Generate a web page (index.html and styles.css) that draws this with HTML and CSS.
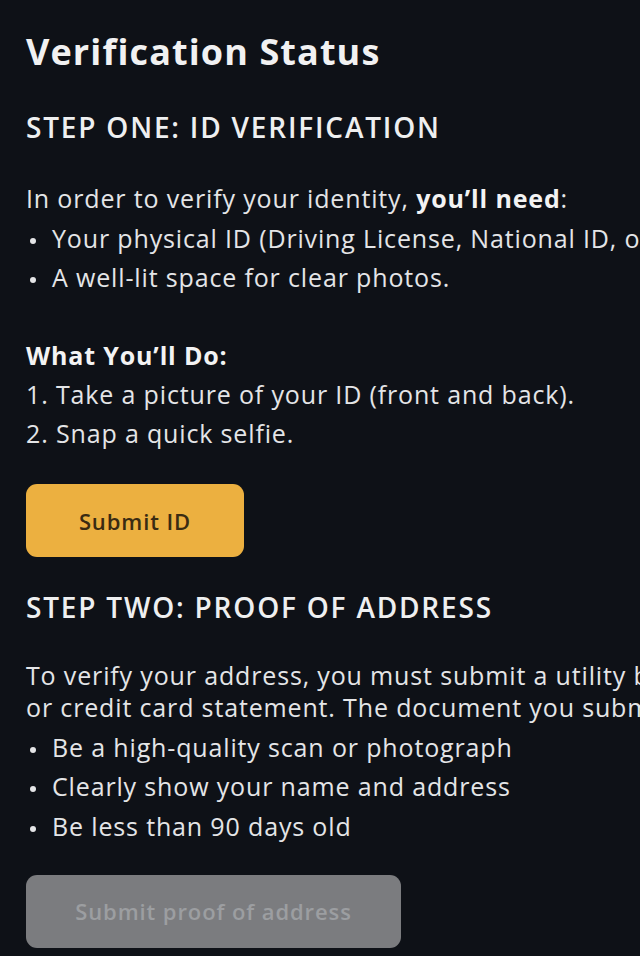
FILE: index.html
```html
<!DOCTYPE html>
<html lang="en">
<head>
<meta charset="utf-8">
<title>Verification Status</title>
<link rel="stylesheet" href="styles.css">
</head>
<body>
<main class="page">
  <h1 class="title">Verification Status</h1>

  <section class="step step-one">
    <h2 class="step-title">STEP ONE: ID VERIFICATION</h2>
    <p class="para">In order to verify your identity, <strong>you’ll need</strong>:</p>
    <ul class="bullets">
      <li>Your physical ID (Driving License, National ID, or Passport).</li>
      <li>A well-lit space for clear photos.</li>
    </ul>
    <p class="para label"><strong>What You’ll Do:</strong></p>
    <ol class="steps">
      <li>1. Take a picture of your ID (front and back).</li>
      <li>2. Snap a quick selfie.</li>
    </ol>
    <button class="btn btn-primary" type="button">Submit ID</button>
  </section>

  <section class="step step-two">
    <h2 class="step-title">STEP TWO: PROOF OF ADDRESS</h2>
    <p class="para">To verify your address, you must submit a utility bill, bank statement,<br>or credit card statement. The document you submit must:</p>
    <ul class="bullets">
      <li>Be a high-quality scan or photograph</li>
      <li>Clearly show your name and address</li>
      <li>Be less than 90 days old</li>
    </ul>
    <button class="btn btn-disabled" type="button" disabled>Submit proof of address</button>
  </section>
</main>
</body>
</html>
```

FILE: styles.css
```css
html, body {
  margin: 0;
  padding: 0;
  background: #0e1117;
  overflow: hidden;
}

.page {
  width: 640px;
  height: 956px;
  overflow: hidden;
  box-sizing: border-box;
  padding: 30px 0 0 26px;
  font-family: "Open Sans", "Noto Sans", sans-serif;
  color: #e4e5e7;
  white-space: nowrap;
}

.title {
  margin: 0;
  font-size: 36px;
  line-height: 44px;
  font-weight: 700;
  color: #f1f1f2;
  letter-spacing: 1.1px;
}

.step-title {
  margin: 0;
  font-size: 28px;
  line-height: 36px;
  font-weight: 600;
  color: #eeeff0;
  letter-spacing: 1.8px;
}

.step-one .step-title {
  margin-top: 35px;
}

.step-two .step-title {
  margin-top: 32px;
}

.para {
  margin: 0;
  font-size: 25px;
  line-height: 32px;
  font-weight: 400;
  letter-spacing: 0.85px;
}

.step-one .para {
  margin-top: 37px;
}

.step-two .para {
  margin-top: 34px;
}

.para strong {
  font-weight: 700;
  color: #f3f3f3;
}

.step-one .label {
  margin-top: 46px;
}

.bullets,
.steps {
  list-style: none;
  margin: 0;
  padding: 0;
  font-size: 25px;
  line-height: 32px;
  font-weight: 400;
  letter-spacing: 0.85px;
}

.bullets li,
.steps li {
  margin-top: 7.5px;
}

.steps li:first-child {
  margin-top: 6.5px;
}

.bullets li {
  position: relative;
  padding-left: 26px;
}

.bullets li::before {
  content: "";
  position: absolute;
  left: 4px;
  top: 16px;
  width: 6px;
  height: 6px;
  border-radius: 50%;
  background: #e4e5e7;
}

.btn {
  display: block;
  box-sizing: border-box;
  height: 73px;
  border: none;
  border-radius: 11px;
  font-family: "Open Sans", "Noto Sans", sans-serif;
  font-size: 22px;
  font-weight: 600;
  letter-spacing: 0.9px;
  padding: 0;
}

.btn-primary {
  margin-top: 35px;
  width: 218px;
  background: #ecb040;
  color: #3a2b12;
}

.btn-disabled {
  margin-top: 33px;
  width: 375px;
  background: #7b7c7f;
  color: #9c9ea1;
}
```
